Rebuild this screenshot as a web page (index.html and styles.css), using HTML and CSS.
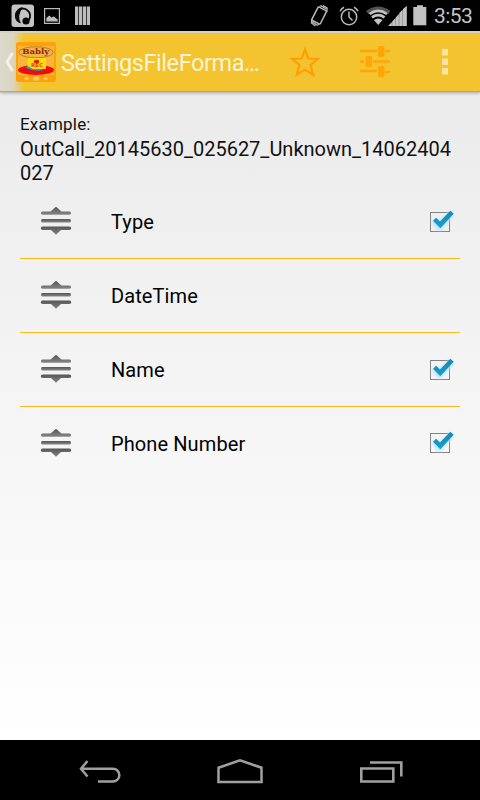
FILE: index.html
```
<!DOCTYPE html>
<html lang="en">
<head>
    <meta charset="UTF-8">
    <meta name="viewport" content="width=device-width, initial-scale=1.0">
    <title>SettingsFileFormat</title>
    <link rel="stylesheet" href="styles.css">
</head>
<body>

<svg class="defs" width="0" height="0">
    <defs>
        <linearGradient id="gripFill" x1="0" y1="0" x2="0" y2="1">
            <stop offset="0" stop-color="#555"/>
            <stop offset="1" stop-color="#858585"/>
        </linearGradient>
        <linearGradient id="checkFill" x1="0" y1="0" x2="0" y2="1">
            <stop offset="0" stop-color="#1a86b6"/>
            <stop offset="1" stop-color="#14a0d0"/>
        </linearGradient>
        <filter id="glow" x="-50%" y="-50%" width="200%" height="200%">
            <feGaussianBlur stdDeviation="1.8"/>
        </filter>
    </defs>
    <symbol id="grip" viewBox="0 0 32 30">
        <path fill="url(#gripFill)" d="M2.500 5.500H10.500L16 .8L21.500 5.500H29.500A1 1 0 0 1 29.500 8.700H2.500A1 1 0 0 1 2.500 5.500Z"/>
        <rect x="1.200" y="13" width="29.600" height="3.400" rx="1.200" fill="url(#gripFill)"/>
        <path fill="url(#gripFill)" d="M2.500 20.500H29.500A1 1 0 0 1 29.500 24H21L16 28.700L11 24H2.500A1 1 0 0 1 2.500 20.500Z"/>
    </symbol>
    <symbol id="check" viewBox="0 0 34 34">
        <rect x="5.500" y="7.500" width="19" height="19" fill="none" stroke="#858585"/>
        <path d="M9 15.500L14.500 21.500L26.500 8.500" fill="none" stroke="#b5e5f6" stroke-width="6" filter="url(#glow)"/>
        <path fill="url(#checkFill)" d="M8 15.800L11.200 12.800L15 16.600L25.300 5.800L28.700 8.700L15.300 23.200Z"/>
    </symbol>
</svg>

<header class="status-bar">
    <div class="status-left">
        <svg width="24" height="24" viewBox="0 0 24 24">
            <rect x=".5" y=".5" width="22.500" height="22.500" rx="3" fill="#c4c4c4"/>
            <path fill="none" stroke="#080808" stroke-width="1.800" d="M17.500 16.500A7.200 7.200 0 1 0 9 18.500"/>
            <path fill="#080808" d="M12 3A8.500 8.500 0 0 0 10 19.500Q5.500 12 12 3Z"/>
            <circle cx="15" cy="17" r="3.600" fill="#080808"/>
        </svg>
        <svg width="16" height="16" viewBox="0 0 16 16">
            <rect x=".6" y=".6" width="14.800" height="14.800" fill="none" stroke="#bbb" stroke-width="1.200"/>
            <path fill="#bbb" d="M2.300 13.500V10L5.300 7.500L7.500 9.500L9.800 8.500L13.700 11.500V13.500Z"/>
        </svg>
        <svg width="16" height="20" viewBox="0 0 16 20">
            <path fill="#bdbdbd" d="M0 .5H3.300V19H0ZM4 .5H7.300V19H4ZM8 .5H11V19H8ZM11.700 .5H15V19H11.700Z"/>
        </svg>
    </div>
    <div class="status-right">
        <svg width="20" height="22" viewBox="0 0 20 22">
            <g fill="none" stroke="#b9b9b9">
                <rect x="4.300" y="3" width="9.500" height="15" rx="1" stroke-width="1.500" transform="rotate(27 9 10.750)"/>
                <path stroke-width="1.200" d="M9.500 1.500L11 .8L17 4.500V7M1.500 14V16.500L7 20L9 19.500M.8 17.500L5.500 21M13 .5L18 3.500"/>
            </g>
        </svg>
        <svg width="20" height="20" viewBox="0 0 20 20">
            <g fill="none" stroke="#b9b9b9" stroke-width="1.500">
                <circle cx="10" cy="11" r="7.700"/>
                <path d="M10 5.500V11L13.500 14.500M1 5.200A8 8 0 0 1 5 1.300M15 1.300A8 8 0 0 1 19 5.200"/>
            </g>
        </svg>
        <svg class="signals" width="41" height="20" viewBox="0 0 41 20">
            <path fill="#515151" d="M0 5Q12.200 -4 24.500 5L22.300 8Q12.200 .5 2.300 8Z"/>
            <g fill="none" stroke="#c2c2c2" stroke-width="2.700">
                <path d="M3.500 8Q12.200 1.800 21 8M6 11.300Q12.200 7 18.500 11.300"/>
            </g>
            <path fill="#c2c2c2" d="M7.800 13.900Q12.200 10.900 16.600 13.900L12.200 19Z"/>
            <path fill="#777" d="M22.500 20L40.700 0V20Z"/>
            <path fill="#c2c2c2" d="M22.500 20V19.500L25.800 16.300V20ZM26.300 20V15.500L29.300 12.300V20ZM29.800 20V11.500L32.800 8V20ZM33.300 20V7L36.500 3.700V20ZM37 20V3L40.700 0V20Z"/>
        </svg>
        <svg class="battery" width="14" height="21" viewBox="0 0 14 21">
            <path fill="#c2c2c2" d="M4 .3H10V2H13.300V20.300H.3V2H4Z"/>
        </svg>
        <span class="clock">3:53</span>
    </div>
</header>

<div class="action-bar">
    <svg class="up" width="9" height="20" viewBox="0 0 9 20">
        <path d="M7.500 1L2.200 10L7.500 19" fill="none" stroke="#f5f2e6" stroke-width="2.800"/>
    </svg>
    <svg class="logo" width="40" height="40" viewBox="0 0 40 40">
        <rect width="40" height="40" rx="2.500" fill="#ffa10a"/>
        <rect x="2" y="4" width="36" height="29" fill="#f9b536"/>
        <ellipse cx="20" cy="10.300" rx="17.300" ry="5.500" fill="#f2b347" stroke="#aa7432" stroke-width=".8"/>
        <text class="logo-title" x="6.200" y="12" textLength="27" lengthAdjust="spacingAndGlyphs">Bably</text>
        <ellipse cx="20" cy="28" rx="18" ry="5" fill="#f40909"/>
        <path fill="#10a5e8" d="M9 25L14 23.500L28 28Q19 30.500 9 25Z"/>
        <path fill="#ffdc09" d="M12 16H30V27H17L11.500 24Z"/>
        <path fill="#e51b12" d="M17.500 19Q20.500 16.500 23.500 19Q23.500 21 20.500 22Q17.500 21 17.500 19Z"/>
        <text class="logo-tag" x="15" y="25.300" textLength="12" lengthAdjust="spacingAndGlyphs">REC</text>
        <g fill="#ffc45b">
            <ellipse cx="10.500" cy="36.500" rx="2.300" ry="1.500"/>
            <ellipse cx="20" cy="36.500" rx="3.300" ry="2.200"/>
            <ellipse cx="29.500" cy="36.500" rx="2.300" ry="1.500"/>
        </g>
    </svg>
    <h1 class="title">SettingsFileForma…</h1>
    <svg class="star" width="32" height="32" viewBox="0 0 32 32">
        <path d="M16 3.500L19.300 12.500L29 12.800L21.500 19L24.300 28.600L16 23.800L7.700 28.600L10.500 19L3 12.800L12.700 12.500Z" fill="none" stroke="#ff9f05" stroke-width="2.200"/>
    </svg>
    <svg class="sliders" width="30" height="32" viewBox="0 0 30 32">
        <path d="M0 5H17M25 5H30M0 15.500H4M13 15.500H30M0 25H17M25 26H30" stroke="#ffa505" stroke-width="2.400"/>
        <g fill="#ffa505">
            <rect x="18" y="0" width="6.500" height="11" rx="1.500"/>
            <rect x="5.500" y="10" width="6.500" height="11" rx="1.500"/>
            <rect x="18" y="20" width="6.500" height="11" rx="1.500"/>
        </g>
    </svg>
    <svg class="overflow" width="6" height="26" viewBox="0 0 6 26">
        <path fill="#fae5a0" d="M0 0H6V6.500H0ZM0 9.500H6V16H0ZM0 19H6V25.500H0Z"/>
    </svg>
</div>

<main class="content">
    <div class="example-label">Example:</div>
    <div class="example-name">OutCall_20145630_025627_Unknown_14062404027</div>
    <ul class="fields">
        <li class="field">
            <svg class="grip"><use href="#grip"/></svg>
            <span class="field-name">Type</span>
            <svg class="check"><use href="#check"/></svg>
        </li>
        <li class="field">
            <svg class="grip"><use href="#grip"/></svg>
            <span class="field-name">DateTime</span>
        </li>
        <li class="field">
            <svg class="grip"><use href="#grip"/></svg>
            <span class="field-name">Name</span>
            <svg class="check"><use href="#check"/></svg>
        </li>
        <li class="field">
            <svg class="grip"><use href="#grip"/></svg>
            <span class="field-name">Phone Number</span>
            <svg class="check"><use href="#check"/></svg>
        </li>
    </ul>
</main>

<nav class="nav-bar">
    <svg width="42" height="24" viewBox="0 0 42 24">
        <path d="M2 8.800H34A6.300 6.300 0 0 1 34 21.500H19M8.500 1L2 8.800L8.500 16.500" fill="none" stroke="#a0a0a0" stroke-width="2.500"/>
    </svg>
    <svg width="46" height="26" viewBox="0 0 46 26">
        <path d="M1.500 8.700L23 1.300L44.500 8.700V23H1.500Z" fill="none" stroke="#a0a0a0" stroke-width="2.500"/>
    </svg>
    <svg width="44" height="24" viewBox="0 0 44 24">
        <path d="M2.300 8.500H34.300V21.500H2.300ZM11 2.500H42.300V16.500" fill="none" stroke="#a0a0a0" stroke-width="2.600"/>
    </svg>
</nav>

</body>
</html>
```
FILE: styles.css
```
body {
    margin: 0;
    width: 480px;
    height: 800px;
    overflow: hidden;
    display: flex;
    flex-direction: column;
    font-family: Roboto, sans-serif;
    color: #111;
    background: linear-gradient(#e8e8e8 31px, #eee 180px, #fff 740px);
}
svg {
    display: block;
    flex: none;
}
.defs {
    position: absolute;
}
.status-bar {
    height: 31px;
    flex: none;
    box-sizing: border-box;
    padding: 0 7px 0 11px;
    display: flex;
    justify-content: space-between;
    background: #000;
}
.status-left,
.status-right {
    display: flex;
    align-items: center;
}
.status-left {
    gap: 12px;
}
.status-left svg:first-child {
    margin-right: -3px;
}
.status-left svg:last-child {
    margin-left: 3px;
}
.status-right {
    width: 163px;
}
.signals {
    margin: 0 6px 0 7px;
}
.status-right svg:nth-child(2) {
    margin-left: 9px;
}
.battery {
    margin-right: 7px;
}
.clock {
    padding-top: 2px;
    font-size: 21px;
    line-height: 31px;
    letter-spacing: -0.6px;
    color: #c4c4c4;
    white-space: nowrap;
}
.action-bar {
    height: 61px;
    flex: none;
    box-sizing: border-box;
    padding: 0 32px 0 5px;
    display: flex;
    align-items: center;
    border-top: 2px solid #d6d2c1;
    border-bottom: 1px solid #c9a548;
    background: linear-gradient(90deg, #dcd9cd 0, #dad5c0 13px, #f4c430 24px);
    box-shadow: 0 1px 3px rgba(0, 0, 0, 0.3);
}
.logo {
    margin: 0 5px 0 2px;
}
.logo-title {
    font: bold 8px "DejaVu Serif", serif;
    fill: #912911;
}
.logo-tag {
    font: bold 5px "DejaVu Sans", sans-serif;
    fill: #e5431b;
}
.title {
    margin: 0;
    padding-top: 2px;
    width: 228px;
    font-size: 23.5px;
    font-weight: 400;
    line-height: 30px;
    letter-spacing: -0.42px;
    color: #fbf3d7;
    white-space: nowrap;
}
.sliders {
    margin: 0 52px 0 39px;
}
.content {
    flex: 1;
    padding: 21px 20px 0;
}
.example-label {
    font-size: 17px;
    line-height: 22px;
    letter-spacing: 0.2px;
    padding-bottom: 2px;
}
.example-name {
    font-size: 20px;
    line-height: 24px;
    word-break: break-all;
}
.fields {
    list-style: none;
    margin: 0;
    padding: 0;
}
.field {
    height: 74px;
    box-sizing: border-box;
    display: flex;
    align-items: center;
    border-bottom: 1px solid #ffb71c;
}
.field:last-child {
    height: 73px;
    border-bottom: none;
}
.grip {
    width: 32px;
    height: 30px;
    margin: 0 39px 2px 20px;
}
.field-name {
    flex: 1;
    font-size: 20px;
    letter-spacing: 0.1px;
    color: #000;
}
.check {
    width: 34px;
    height: 34px;
    margin-right: 1px;
}
.field:last-child .check {
    margin-bottom: 2px;
}
.nav-bar {
    height: 60px;
    flex: none;
    box-sizing: border-box;
    padding: 3px 77px 0 79px;
    display: flex;
    align-items: center;
    justify-content: space-between;
    background: #000;
}
```
